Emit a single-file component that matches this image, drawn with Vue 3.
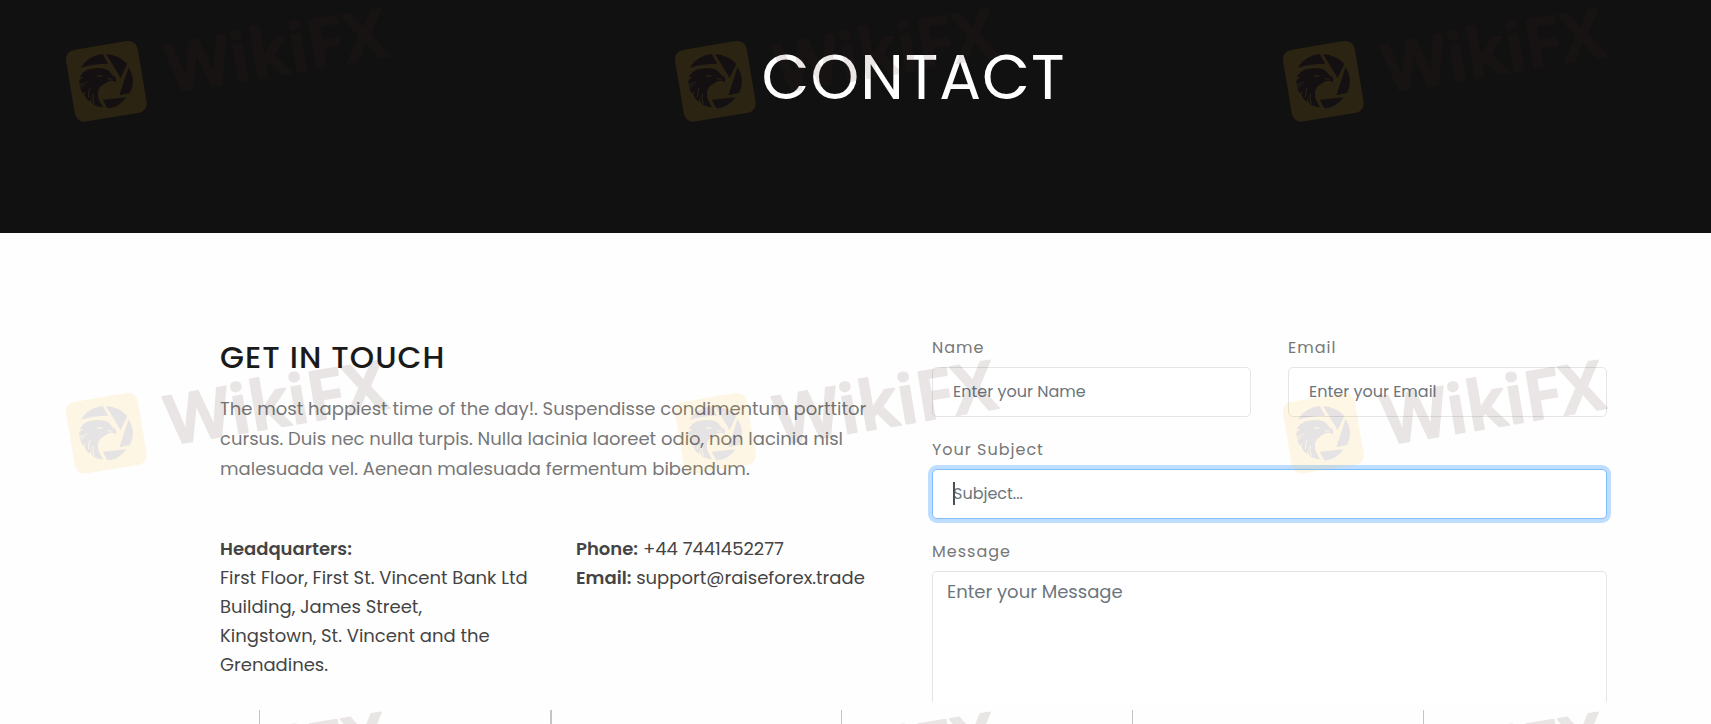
<script setup>
import { ref } from 'vue'

const name = ref('')
const email = ref('')
const subject = ref('')
const message = ref('')

const tiles = []
for (let row = 0; row < 3; row++) {
  for (let col = 0; col < 3; col++) {
    tiles.push({ id: `${row}-${col}`, x: Math.round(col * 608.5), y: row * 352 })
  }
}
</script>

<template>
  <div class="page">
    <header class="hero">
      <h1>CONTACT</h1>
    </header>

    <main class="contact">
      <section class="info">
        <h2>GET IN TOUCH</h2>
        <p class="lead">
          The most happiest time of the day!. Suspendisse condimentum porttitor<br />
          cursus. Duis nec nulla turpis. Nulla lacinia laoreet odio, non lacinia nisl<br />
          malesuada vel. Aenean malesuada fermentum bibendum.
        </p>
        <div class="details">
          <address>
            <strong>Headquarters:</strong><br />
            First Floor, First St. Vincent Bank Ltd<br />
            Building, James Street,<br />
            Kingstown, St. Vincent and the<br />
            Grenadines.
          </address>
          <address>
            <strong>Phone:</strong> +44 7441452277<br />
            <strong>Email:</strong> support@raiseforex.trade
          </address>
        </div>
      </section>

      <form class="form" @submit.prevent>
        <div class="field">
          <label for="name">Name</label>
          <input id="name" v-model="name" type="text" placeholder="Enter your Name" />
        </div>
        <div class="field">
          <label for="email">Email</label>
          <input id="email" v-model="email" type="email" placeholder="Enter your Email" />
        </div>
        <div class="field wide">
          <label for="subject">Your Subject</label>
          <div class="active">
            <input id="subject" v-model="subject" type="text" placeholder="Subject..." />
            <span v-if="!subject" class="caret"></span>
          </div>
        </div>
        <div class="field wide">
          <label for="message">Message</label>
          <textarea id="message" v-model="message" placeholder="Enter your Message"></textarea>
        </div>
      </form>
    </main>

    <div class="strip">
      <span v-for="n in 5" :key="n" :class="{ strong: n === 2 }"></span>
    </div>

    <svg class="watermark" aria-hidden="true">
      <g v-for="t in tiles" :key="t.id" :transform="`translate(${t.x} ${t.y})`" opacity="0.11">
        <g transform="translate(40 0) scale(0.3333)">
          <rect x="90" y="135" width="218" height="218" rx="28" fill="#fabc20" transform="rotate(-9.5 199 244)" />
          <g fill="#301020">
            <path d="M122 203 Q142 168 188 162 L205 191 Q160 191 122 203Z" />
            <path d="M198 162 Q238 165 262 192 L242 234Z" />
            <path d="M266 201 Q290 242 270 279 L238 286Z" />
            <path d="M260 292 Q235 325 202 325 L188 299Z" />
            <path d="M119 232 Q128 213 147 208 Q184 199 205 211 Q213 224 225 231 Q231 237 228 247 Q217 239 203 245 L189 254 Q172 263 174 286 Q176 304 190 322 Q171 321 158 311 L150 294 L151 307 Q139 299 133 286 L136 273 L129 281 Q122 271 120 259 L130 246 L118 254 Q117 244 119 240 L130 231Z" />
          </g>
          <path d="M169 222 Q178 229 191 226 Q183 234 173 229Z" fill="#fabc20" />
          <path d="M124 263 Q132 249 141 245 M146 292 Q144 276 151 263 M163 311 Q156 295 160 281 M203 237 L218 236" fill="none" stroke="#fabc20" stroke-width="3" />
        </g>
        <text x="170" y="93" transform="rotate(-9.5 170 93)">WikiFX</text>
      </g>
    </svg>
  </div>
</template>

<style>
body {
  margin: 0;
}
</style>

<style scoped>
.page {
  position: relative;
  display: flex;
  flex-direction: column;
  min-height: 100vh;
  overflow: hidden;
  background: #fefefe;
  color: #444;
  font-family: Poppins, Inter, "Open Sans", sans-serif;
  font-size: 18px;
}

.hero {
  padding: 38px 0 115px;
  background: #111;
  text-align: center;
}

h1 {
  margin: 0;
  padding-left: 116px;
  color: #fff;
  font-size: 62px;
  font-weight: 400;
  letter-spacing: 1px;
  line-height: 80px;
}

.contact {
  display: grid;
  grid-template-columns: 1fr 1fr;
  gap: 37px;
  padding: 102px 104px 0 220px;
}

h2 {
  margin: 0;
  color: #1a1a1a;
  font-size: 31px;
  font-weight: 500;
  letter-spacing: 1px;
  line-height: 44px;
}

.lead {
  margin: 15px 0 0;
  color: #777;
  line-height: 30px;
  white-space: nowrap;
}

.details {
  display: grid;
  grid-template-columns: 1fr 1fr;
  gap: 37px;
  margin-top: 50px;
}

address {
  font-style: normal;
  line-height: 29px;
  white-space: nowrap;
}

strong {
  font-weight: 600;
}

.form {
  display: grid;
  grid-template-columns: 1fr 1fr;
  gap: 20px 37px;
  align-content: start;
}

.field {
  display: flex;
  flex-direction: column;
  gap: 7px;
}

.wide {
  grid-column: 1 / -1;
}

label {
  color: #777;
  font-size: 16px;
  letter-spacing: 1px;
  line-height: 25px;
}

input,
textarea {
  box-sizing: border-box;
  width: 100%;
  border: 1px solid #e5e5e5;
  border-radius: 5px;
  background: #fff;
  color: #495057;
  font-family: inherit;
  outline: 0;
}

input {
  height: 50px;
  padding: 0 20px 2px;
  font-size: 16px;
}

textarea {
  display: block;
  height: 131px;
  padding: 6px 14px;
  border-bottom: 0;
  border-radius: 5px 5px 0 0;
  font-size: 18px;
  line-height: 27px;
  resize: none;
}

::placeholder {
  color: #6c757d;
  opacity: 1;
}

.active {
  position: relative;
}

.active input {
  display: block;
  border-color: #80bdff;
  box-shadow: 0 0 0 4px #bfdeff;
}

.caret {
  position: absolute;
  top: 13px;
  left: 21px;
  width: 2px;
  height: 23px;
  background: #495057;
}

.strip {
  display: flex;
  flex: 1;
  min-height: 14px;
  margin-top: 8px;
  padding-left: 259px;
}

.strip span {
  box-sizing: border-box;
  flex: 0 0 291px;
  border-left: 1px solid #c4c4c4;
}

.strip .strong {
  border-left-width: 2px;
}

.watermark {
  position: absolute;
  inset: 0;
  width: 100%;
  height: 100%;
  pointer-events: none;
}

.watermark text {
  fill: #402820;
  stroke: #402820;
  stroke-width: 2px;
  stroke-linejoin: round;
  font-family: "Noto Sans", sans-serif;
  font-size: 68px;
  font-weight: 600;
}
</style>
